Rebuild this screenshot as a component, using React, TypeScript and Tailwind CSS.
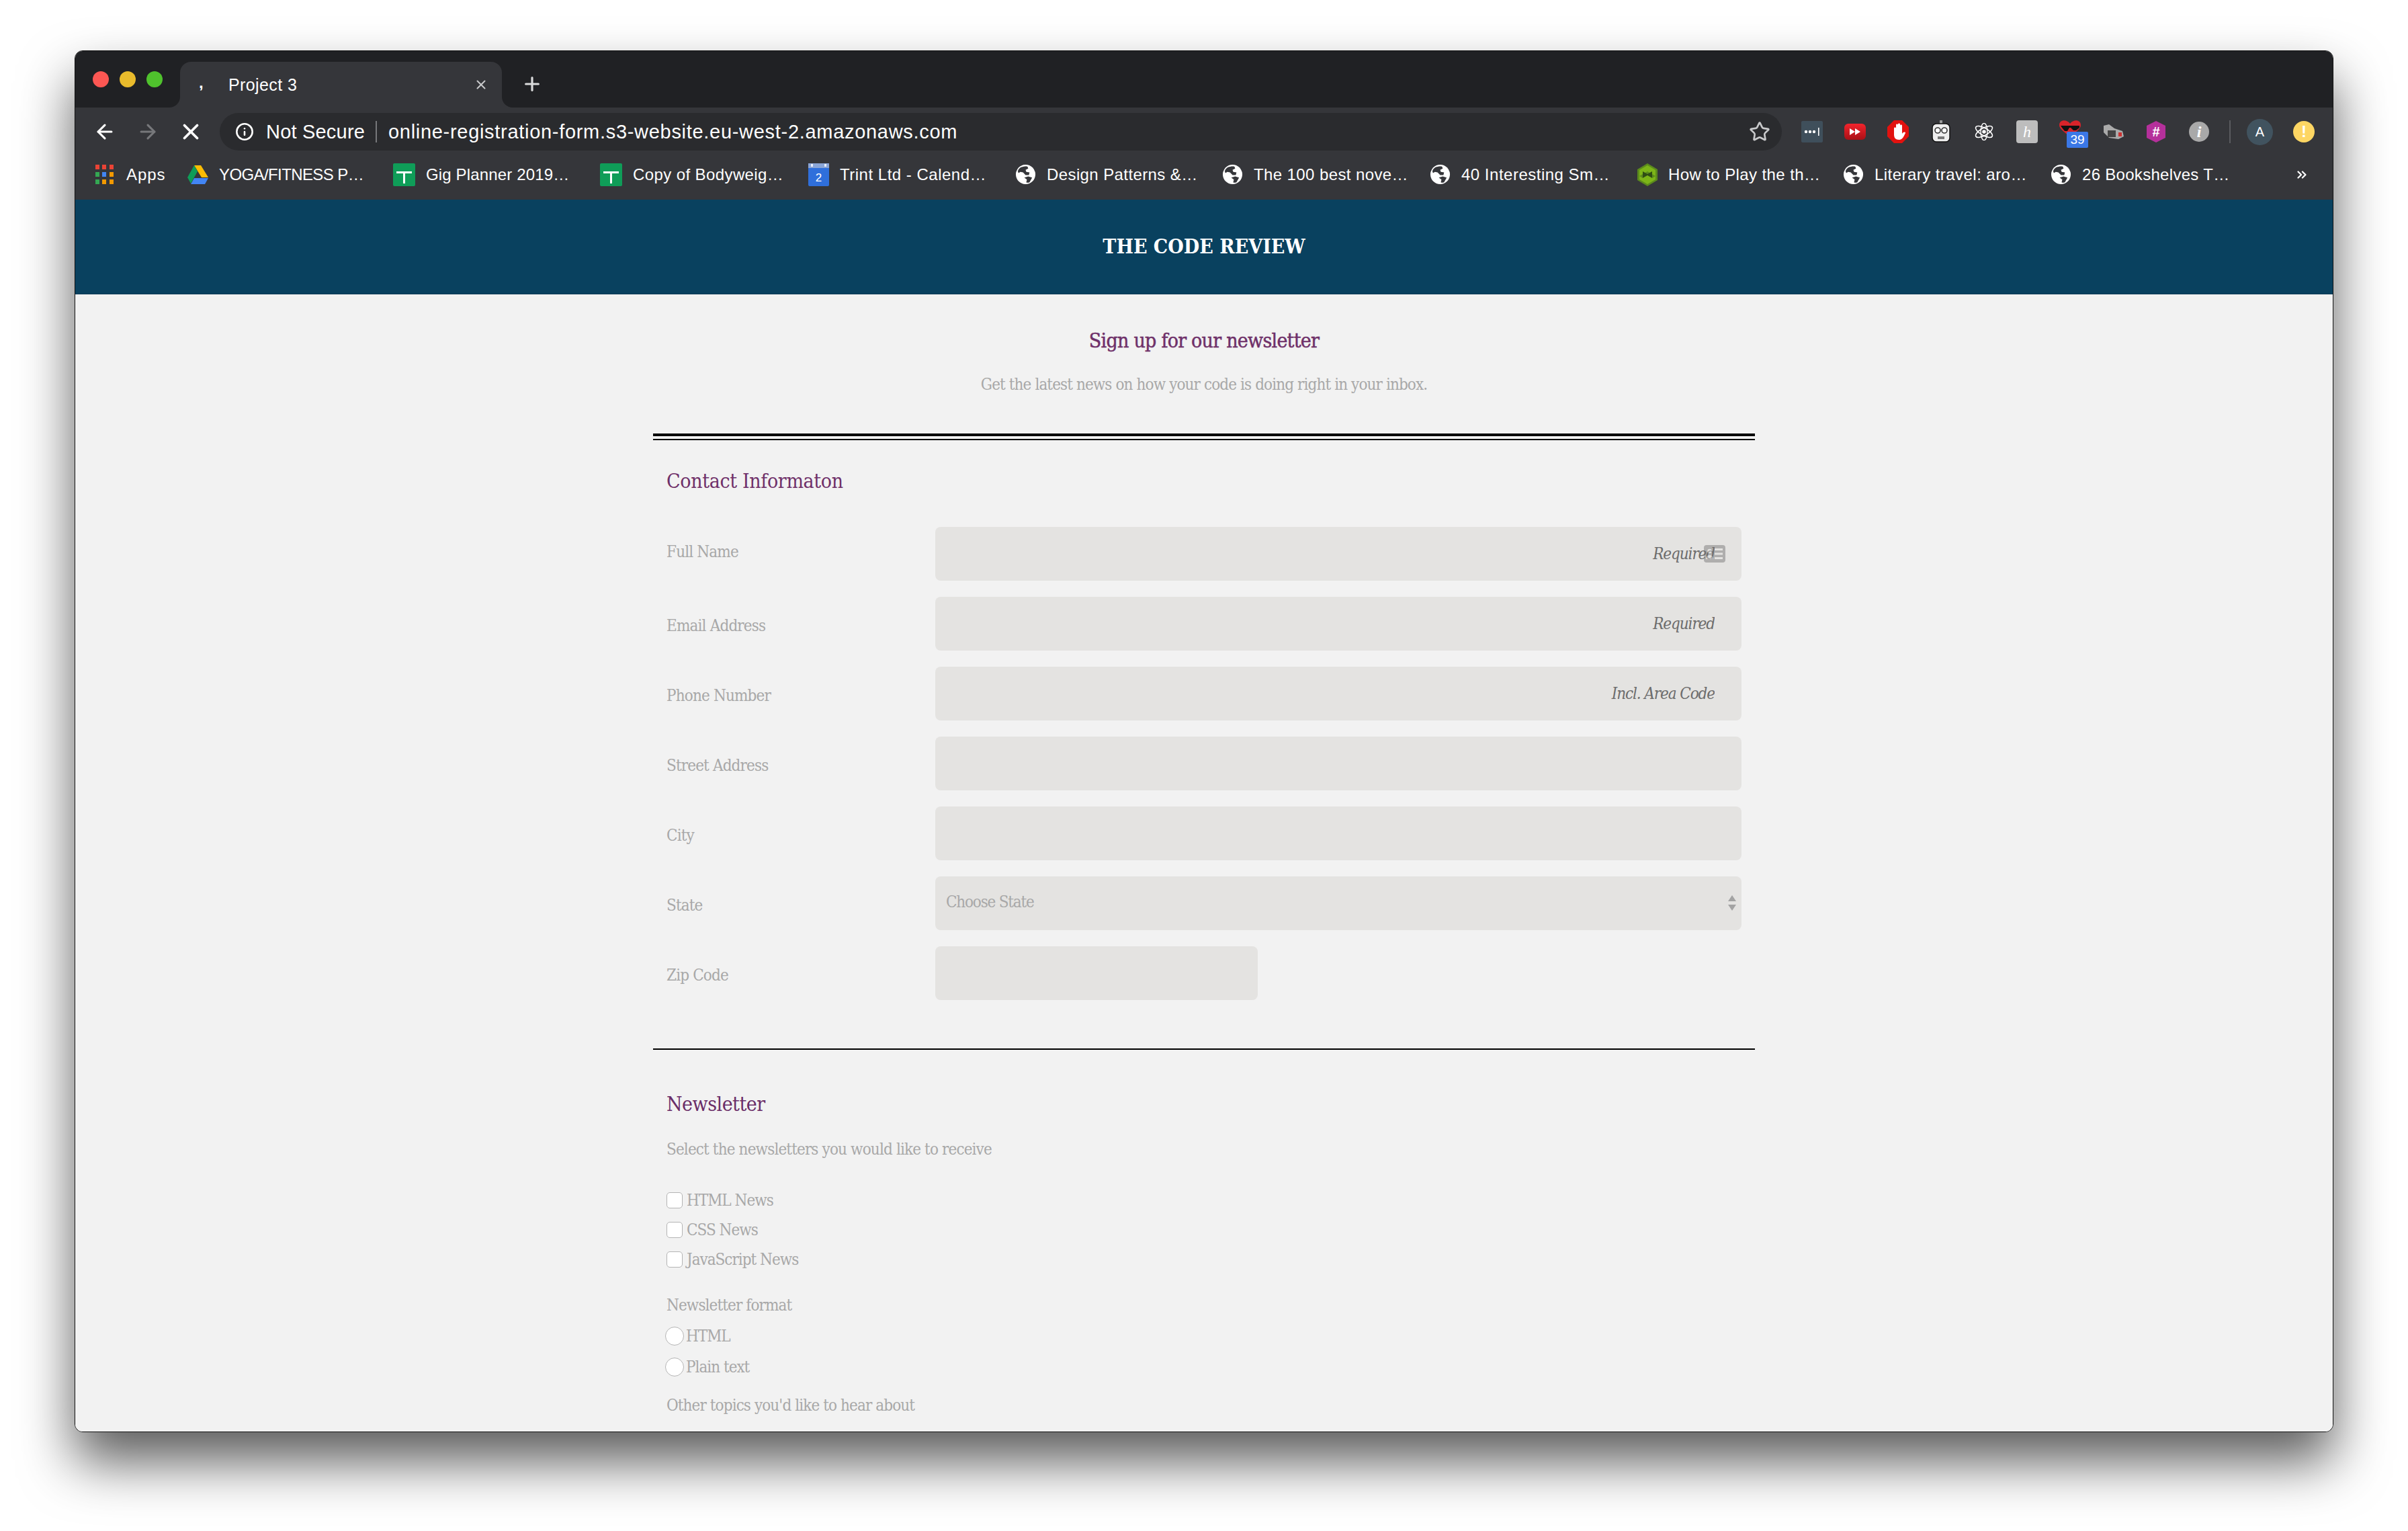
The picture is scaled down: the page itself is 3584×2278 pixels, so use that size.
import React from "react";
import { ArrowLeft, ArrowRight, X, Plus, Star, Info, ChevronsRight } from "lucide-react";

const serif = "font-['DejaVu_Serif_Condensed','DejaVu_Serif',serif]";

function Globe() {
  return (
    <svg width="31" height="31" viewBox="0 0 32 32" className="shrink-0">
      <circle cx="16" cy="16" r="15" fill="#fff" />
      <path d="M9 5c3-1 7-2 10-1l1 3-4 2 1 3 5 1-1 4-5 0-4-4-4-1-3 2-1-3c1-3 3-5 5-6z" fill="#35363a" />
      <path d="M14 21l6-2 6 2-4 7c-2 1-4 1-5 0l1-4z" fill="#35363a" />
    </svg>
  );
}

function Apps() {
  const c = ["#ea4335", "#ea4335", "#ea4335", "#34a853", "#4285f4", "#f29900", "#34a853", "#f29900", "#f29900"];
  return (
    <div className="grid grid-cols-3 gap-[4px] w-[27px] shrink-0">
      {c.map((x, i) => (
        <svg key={i} width="6" height="7" viewBox="0 0 6 7"><rect width="6" height="7" fill={x} /></svg>
      ))}
    </div>
  );
}

function Drive() {
  return (
    <svg width="31" height="28" viewBox="0 0 31 28" className="shrink-0">
      <path d="M10 0h10l11 18H21z" fill="#fbbc04" />
      <path d="M10 0l5 9L5 27 0 18z" fill="#0f9d58" />
      <path d="M5 28l5-9h21l-5 9z" fill="#4285f4" />
    </svg>
  );
}

function Sheet() {
  return (
    <svg width="33" height="34" viewBox="0 0 33 34" className="shrink-0">
      <rect width="33" height="34" rx="2" fill="#0f9d58" />
      <path d="M5 12h23v3H18v15h-3V15H5z" fill="#fff" />
    </svg>
  );
}

function Cal() {
  return (
    <svg width="31" height="34" viewBox="0 0 31 34" className="shrink-0">
      <rect y="0" width="31" height="34" rx="2" fill="#2f6fdb" />
      <rect y="0" width="31" height="7" fill="#8aa5d6" />
      <rect x="4" y="1" width="3" height="4" fill="#e8eefc" />
      <rect x="24" y="1" width="3" height="4" fill="#e8eefc" />
      <text x="15.5" y="27" fontSize="17" fill="#fff" textAnchor="middle" fontFamily="Liberation Sans">2</text>
    </svg>
  );
}

function Hex() {
  return (
    <svg width="30" height="34" viewBox="0 0 30 34" className="shrink-0">
      <path d="M15 0l15 9v16l-15 9L0 25V9z" fill="#5b8a1c" />
      <path d="M15 3l12 7v9l-12-7-12 7v-9z" fill="#7cb518" />
      <path d="M8 12l7 4 7-4v10l-7-4-7 4z" fill="#2f4d14" />
      <path d="M3 19l5 3 7-4 7 4 5-3v5l-12 7-12-7z" fill="#7cb518" />
    </svg>
  );
}

const bookmarks: { icon: React.ReactNode; text: string; w: string; ml: string; t: string }[] = [
  { icon: <Drive />, text: "YOGA/FITNESS P…", w: "w-[214px]", ml: "ml-[33px]", t: "tracking-[-0.6px]" },
  { icon: <Sheet />, text: "Gig Planner 2019…", w: "w-[212px]", ml: "ml-[45px]", t: "tracking-[0.15px]" },
  { icon: <Sheet />, text: "Copy of Bodyweig…", w: "w-[224px]", ml: "ml-[47px]", t: "tracking-[0.4px]" },
  { icon: <Cal />, text: "Trint Ltd - Calend…", w: "w-[217px]", ml: "ml-[37px]", t: "tracking-[0.5px]" },
  { icon: <Globe />, text: "Design Patterns &…", w: "w-[222px]", ml: "ml-[44px]", t: "tracking-[0.4px]" },
  { icon: <Globe />, text: "The 100 best nove…", w: "w-[226px]", ml: "ml-[39px]", t: "tracking-[0.4px]" },
  { icon: <Globe />, text: "40 Interesting Sm…", w: "w-[219px]", ml: "ml-[36px]", t: "tracking-[0.5px]" },
  { icon: <Hex />, text: "How to Play the th…", w: "w-[224px]", ml: "ml-[43px]", t: "tracking-[0.4px]" },
  { icon: <Globe />, text: "Literary travel: aro…", w: "w-[225px]", ml: "ml-[36px]", t: "tracking-[0.45px]" },
  { icon: <Globe />, text: "26 Bookshelves T…", w: "w-[219px]", ml: "ml-[37px]", t: "tracking-[0.3px]" },
];

function Extensions() {
  return (
    <div className="flex items-center h-[56px] ml-[29px]">
      <svg width="32" height="32" viewBox="0 0 32 32">
        <rect width="32" height="32" rx="2" fill="#3f4f5b" />
        <circle cx="7" cy="16" r="2.2" fill="#fff" />
        <circle cx="13" cy="16" r="2.2" fill="#fff" />
        <circle cx="19" cy="16" r="2.2" fill="#fff" />
        <rect x="25" y="10" width="1.6" height="12" fill="#fff" />
      </svg>
      <svg width="32" height="24" viewBox="0 0 32 24" className="ml-[32px]">
        <defs><linearGradient id="rg" x1="0" y1="0" x2="0" y2="1"><stop offset="0" stopColor="#f3242c" /><stop offset="1" stopColor="#a81016" /></linearGradient></defs>
        <rect width="32" height="24" rx="6" fill="url(#rg)" />
        <path d="M8 7l8 5-8 5zM16 7l8 5-8 5z" fill="#fff" />
      </svg>
      <svg width="32" height="34" viewBox="0 0 32 34" className="ml-[32px]">
        <path d="M10 0h12l10 10v14L22 34H10L0 24V10z" fill="#e2120f" />
        <path d="M10 12c0-2 3-2 3 0V7c0-2 3-2 3 0V6c0-2 3-2 3 0v2c0-2 3-2 3 0v12c2-3 5-3 5-1-2 3-3 9-9 10-6 0-8-3-8-8z" fill="#fff" />
      </svg>
      <svg width="32" height="34" viewBox="0 0 32 34" className="ml-[32px]">
        <path d="M14 0h4v5h-4z" fill="#999" />
        <rect x="3" y="5" width="26" height="27" rx="6" fill="#eee" stroke="#111" strokeWidth="1.5" />
        <circle cx="11" cy="15" r="4" fill="#fff" stroke="#333" strokeWidth="1.6" />
        <circle cx="21" cy="15" r="4" fill="#fff" stroke="#333" strokeWidth="1.6" />
        <rect x="11" y="24" width="10" height="4" fill="#777" />
      </svg>
      <svg width="30" height="26" viewBox="-15 -13 30 26" className="ml-[33px]" fill="none" stroke="#fff" strokeWidth="1.6">
        <ellipse rx="14" ry="5.5" transform="rotate(30)" />
        <ellipse rx="14" ry="5.5" transform="rotate(90) scale(0.9)" />
        <ellipse rx="14" ry="5.5" transform="rotate(150)" />
        <circle r="2" fill="#fff" />
      </svg>
      <div className="w-[32px] h-[34px] ml-[33px] bg-[#bdbdbd] rounded-[4px] flex items-center justify-center text-white text-[24px] italic font-['Liberation_Serif',serif]">h</div>
      <div className="relative w-[32px] h-[34px] ml-[32px]">
        <svg width="32" height="24" viewBox="0 0 32 24">
          <path d="M16 24C6 17 0 12 0 7c0-8 11-9 16-2 5-7 16-6 16 2 0 5-6 10-16 17z" fill="#d8232a" />
          <path d="M2 8h28v3l-5 4h-4l-4-4h-2l-3 5H8l-4-5z" fill="#111" />
        </svg>
        <div className="absolute left-[11px] top-[17px] w-[32px] h-[24px] bg-[#3b78e7] rounded-[2px] text-white text-[19px] leading-[24px] text-center font-['Liberation_Sans',sans-serif]">39</div>
      </div>
      <svg width="32" height="22" viewBox="0 0 32 22" className="ml-[32px]">
        <path d="M2 2l8-2 8 6 12 4 2 8-8 4-14-2-8-8z" fill="#aaa" />
        <rect x="8" y="9" width="12" height="10" fill="#444" />
        <rect x="24" y="12" width="5" height="6" fill="#c33" />
      </svg>
      <svg width="32" height="32" viewBox="0 0 32 32" className="ml-[32px]">
        <path d="M16 0l14 7v18l-14 7-14-7V7z" fill="#b5309b" />
        <text x="16" y="23" fontSize="20" fontWeight="700" fill="#fff" textAnchor="middle" fontFamily="Liberation Sans">#</text>
      </svg>
      <div className="w-[30px] h-[30px] ml-[33px] rounded-full bg-[#a9a9a9] flex items-center justify-center text-white text-[24px] font-bold italic font-['Liberation_Serif',serif]">i</div>
      <div className="w-[2px] h-[34px] bg-[#5a5b5f] ml-[30px]" />
      <div className="w-[39px] h-[39px] ml-[24px] rounded-full bg-[#41535f] flex items-center justify-center text-white text-[20px]">A</div>
      <div className="w-[32px] h-[32px] ml-[30px] rounded-full bg-[#fdd663] flex items-center justify-center text-white text-[24px] font-bold">!</div>
    </div>
  );
}

function Row({ label, first, children }: { label: string; first?: boolean; children: React.ReactNode }) {
  return (
    <div className="flex h-[80px]">
      <label className={`w-[400px] shrink-0 text-[24px] leading-[32px] text-[#a8a8a8] tracking-[-0.85px] ${first ? "pt-[21px]" : "pt-[27px]"}`}>{label}</label>
      {children}
    </div>
  );
}

function Field({ placeholder, autofill }: { placeholder?: string; autofill?: boolean }) {
  return (
    <div className="relative w-[1200px] h-[80px]">
      <input
        placeholder={placeholder}
        className="w-full h-full bg-[#e4e3e1] rounded-[8px] pr-[40px] text-right italic text-[24px] tracking-[-1.1px] placeholder:text-[#6c6c6c] outline-none"
      />
      {autofill && (
        <svg width="32" height="26" viewBox="0 0 32 26" className="absolute right-[24px] top-[27px] opacity-45">
          <path fillRule="evenodd" d="M4 0h24a4 4 0 0 1 4 4v18a4 4 0 0 1-4 4H4a4 4 0 0 1-4-4V4a4 4 0 0 1 4-4zM16 5v3h12V5zM16 11.500v3h12v-3zM16 18v3h12v-3z" fill="#707070" />
          <circle cx="8.500" cy="9" r="3.200" fill="#e4e3e1" />
          <path d="M3 21c0-4 2.500-6 5.500-6s5.500 2 5.500 6z" fill="#e4e3e1" />
        </svg>
      )}
    </div>
  );
}

function Check({ label }: { label: string }) {
  return (
    <div className="flex items-center h-[24px] mb-[20px] text-[24px] leading-[24px] text-[#a8a8a8] tracking-[-1px]">
      <span className="w-[24px] h-[24px] bg-white border border-[#b4b4b4] rounded-[5px] mr-[6px] shrink-0" />
      {label}
    </div>
  );
}

function Radio({ label }: { label: string }) {
  return (
    <div className="flex items-center h-[28px] mb-[18px] -ml-[2px] text-[24px] leading-[28px] text-[#a8a8a8] tracking-[-1px]">
      <span className="w-[28px] h-[28px] bg-white border border-[#b4b4b4] rounded-full mr-[3px] shrink-0" />
      {label}
    </div>
  );
}

export default function App() {
  return (
    <div className="w-[3584px] h-[2278px] bg-white pt-[75px] pl-[111px] overflow-hidden">
      <div className="w-[3362px] h-[2056px] flex flex-col rounded-[12px] overflow-hidden border border-[#111] shadow-[0_44px_80px_rgba(0,0,0,0.64)] bg-[#f2f2f2]">
        {/* tab strip */}
        <div className="h-[84px] shrink-0 bg-[#202124] flex font-['Liberation_Sans',sans-serif] text-white">
          <div className="flex items-center gap-[16px] pl-[26px] h-[84px] w-[156px] shrink-0">
            <span className="w-[24px] h-[24px] rounded-full bg-[#fc5753]" />
            <span className="w-[24px] h-[24px] rounded-full bg-[#e9bb2c]" />
            <span className="w-[24px] h-[24px] rounded-full bg-[#4fc22d]" />
          </div>
          <div className="relative mt-[16px] w-[479px] h-[68px] bg-[#35363a] rounded-t-[16px] flex items-center pl-[28px] pr-[22px]">
            <span className="absolute -left-[16px] bottom-0 w-[16px] h-[16px] bg-[#35363a]"><span className="block w-[16px] h-[16px] bg-[#202124] rounded-br-[16px]" /></span>
            <span className="absolute -right-[16px] bottom-0 w-[16px] h-[16px] bg-[#35363a]"><span className="block w-[16px] h-[16px] bg-[#202124] rounded-bl-[16px]" /></span>
            <span className="w-[28px] text-[24px] leading-none -mt-[6px] font-bold">,</span>
            <span className="ml-[16px] text-[25px] leading-[32px] tracking-[0.4px]">Project 3</span>
            <X size={22} strokeWidth={2.2} className="ml-auto text-[#c8c9cb] -mr-[2px]" />
          </div>
          <Plus size={32} strokeWidth={2.4} className="ml-[29px] mt-[33px] text-[#dadbdc]" />
        </div>
        {/* toolbar */}
        <div className="h-[64px] shrink-0 bg-[#35363a] flex items-start pt-[8px] font-['Liberation_Sans',sans-serif] text-white">
          <div className="flex items-center h-[56px] pl-[27px]">
            <ArrowLeft size={34} strokeWidth={2.2} />
            <ArrowRight size={34} strokeWidth={2.2} className="ml-[30px] text-[#77787b]" />
            <X size={38} strokeWidth={2.4} className="ml-[28px]" />
          </div>
          <div className="ml-[24px] w-[2325px] h-[56px] bg-[#2a2b2e] rounded-full flex items-center pl-[23px] pr-[17px]">
            <Info size={28} strokeWidth={2.2} className="shrink-0" />
            <span className="ml-[18px] text-[29px] leading-[32px] tracking-[0.2px] w-[146px] whitespace-nowrap">Not Secure</span>
            <span className="ml-[17px] w-[2px] h-[32px] bg-[#77787b]" />
            <span className="ml-[17px] text-[29px] leading-[32px] tracking-[0.7px] whitespace-nowrap">online-registration-form.s3-website.eu-west-2.amazonaws.com</span>
            <Star size={32} strokeWidth={2} className="ml-auto text-[#c8c9cb]" />
          </div>
          <Extensions />
        </div>
        {/* bookmarks */}
        <div className="h-[73px] shrink-0 bg-[#35363a] flex items-center pb-[2px] pl-[30px] font-['Liberation_Sans',sans-serif] text-white text-[24px] leading-[32px]">
          <Apps />
          <span className="ml-[19px] w-[58px] tracking-[0.9px]">Apps</span>
          {bookmarks.map((b) => (
            <div key={b.text} className={`flex items-center shrink-0 ${b.ml}`}>
              {b.icon}
              <span className={`ml-[16px] whitespace-nowrap ${b.w} ${b.t}`}>{b.text}</span>
            </div>
          ))}
          <ChevronsRight size={22} strokeWidth={2.4} className="ml-[97px]" />
        </div>
        {/* page */}
        <div className={`flex-1 min-h-0 bg-[#f2f2f2] ${serif}`}>
          <header className="h-[141px] bg-[#09415f] border-b border-[#0b3a55] flex items-center justify-center">
            <h1 className="text-white font-bold text-[30px] leading-[40px]">THE CODE REVIEW</h1>
          </header>
          <div className="w-[1640px] mx-auto">
            <h2 className="mt-[49px] text-center text-[#6f3069] text-[30px] leading-[40px] tracking-[-0.75px] [-webkit-text-stroke:0.5px_#6f3069]">Sign up for our newsletter</h2>
            <p className="mt-[29px] text-center text-[#a8a8a8] text-[24px] leading-[32px] tracking-[-0.9px]">Get the latest news on how your code is doing right in your inbox.</p>
            <div className="mt-[57px] h-[10px] border-t-[4px] border-b-[2px] border-black" />
            <div className="px-[20px]">
              <h3 className="mt-[41px] text-[#6f3069] text-[30px] leading-[40px] tracking-[-0.35px]">Contact Informaton</h3>
              <div className="mt-[48px] flex flex-col gap-[24px]">
                <Row label="Full Name" first><Field placeholder="Required" autofill /></Row>
                <Row label="Email Address"><Field placeholder="Required" /></Row>
                <Row label="Phone Number"><Field placeholder="Incl. Area Code" /></Row>
                <Row label="Street Address"><Field /></Row>
                <Row label="City"><Field /></Row>
                <Row label="State">
                  <div className="relative w-[1200px] h-[80px]">
                    <select className="w-full h-full appearance-none bg-[#e4e3e1] rounded-[8px] pl-[16px] pb-[4px] text-[24px] tracking-[-1.2px] text-[#a8a8a8] outline-none">
                      <option>Choose State</option>
                    </select>
                    <svg width="12" height="23" viewBox="0 0 12 23" className="absolute right-[8px] top-[28px]" fill="#a3a3a3">
                      <path d="M6 0l6 9H0zM0 14h12l-6 9z" />
                    </svg>
                  </div>
                </Row>
                <Row label="Zip Code">
                  <input className="w-[480px] h-[80px] bg-[#e4e3e1] rounded-[8px] outline-none" />
                </Row>
              </div>
            </div>
            <div className="mt-[72px] h-[2px] bg-black" />
            <div className="px-[20px]">
              <h3 className="mt-[61px] text-[#6a2d68] text-[30px] leading-[40px] tracking-[-0.5px]">Newsletter</h3>
              <p className="mt-[31px] text-[#a8a8a8] text-[24px] leading-[32px] tracking-[-0.86px]">Select the newsletters you would like to receive</p>
              <div className="mt-[48px]">
                <Check label="HTML News" />
                <Check label="CSS News" />
                <Check label="JavaScript News" />
              </div>
              <p className="mt-[40px] text-[#a8a8a8] text-[24px] leading-[32px] tracking-[-0.9px]">Newsletter format</p>
              <div className="mt-[16px]">
                <Radio label="HTML" />
                <Radio label="Plain text" />
              </div>
              <p className="mt-[27px] text-[#a8a8a8] text-[24px] leading-[32px] tracking-[-0.9px]">Other topics you'd like to hear about</p>
            </div>
          </div>
        </div>
      </div>
    </div>
  );
}
